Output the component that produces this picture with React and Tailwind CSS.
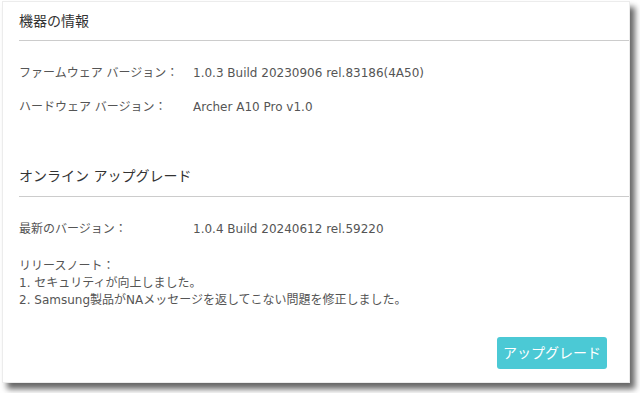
export default function App() {
  const font = { fontFamily: '"DejaVu Sans", "Noto Sans CJK JP", sans-serif' };
  return (
    <div className="w-[640px] h-[393px] bg-white overflow-hidden" style={font}>
      <div className="ml-[2px] mt-[1px] w-[628px] h-[382px] bg-white border border-[#ececec] shadow-[5px_6px_6px_rgba(0,0,0,0.6)] flex flex-col pl-[16px]">
        <div className="h-[38px] flex items-center text-[14px] text-[#333]">機器の情報</div>
        <div className="h-px bg-[#cccccc]" />
        <div className="pt-[15px] flex flex-col text-[12px] text-[#555]">
          <div className="h-[34px] flex items-center">
            <div className="w-[174px]">ファームウェア バージョン：</div>
            <div>1.0.3 Build 20230906 rel.83186(4A50)</div>
          </div>
          <div className="h-[34px] flex items-center">
            <div className="w-[174px]">ハードウェア バージョン：</div>
            <div>Archer A10 Pro v1.0</div>
          </div>
        </div>
        <div className="mt-[33px] h-[39px] flex items-center text-[14px] text-[#333]">オンライン アップグレード</div>
        <div className="h-px bg-[#cccccc]" />
        <div className="pt-[15px] flex flex-col text-[12px] text-[#555]">
          <div className="h-[34px] flex items-center">
            <div className="w-[174px]">最新のバージョン：</div>
            <div>1.0.4 Build 20240612 rel.59220</div>
          </div>
        </div>
        <div className="mt-[12px] flex flex-col text-[12px] leading-[17px] text-[#555]">
          <div>リリースノート：</div>
          <div>1. セキュリティが向上しました。</div>
          <div>2. Samsung製品がNAメッセージを返してこない問題を修正しました。</div>
        </div>
        <div className="mt-[28px] flex justify-end pr-[22px]">
          <button className="w-[110px] h-[32px] rounded-[3px] bg-[#4bc9d5] text-white text-[14px]" style={font}>アップグレード</button>
        </div>
      </div>
    </div>
  );
}
